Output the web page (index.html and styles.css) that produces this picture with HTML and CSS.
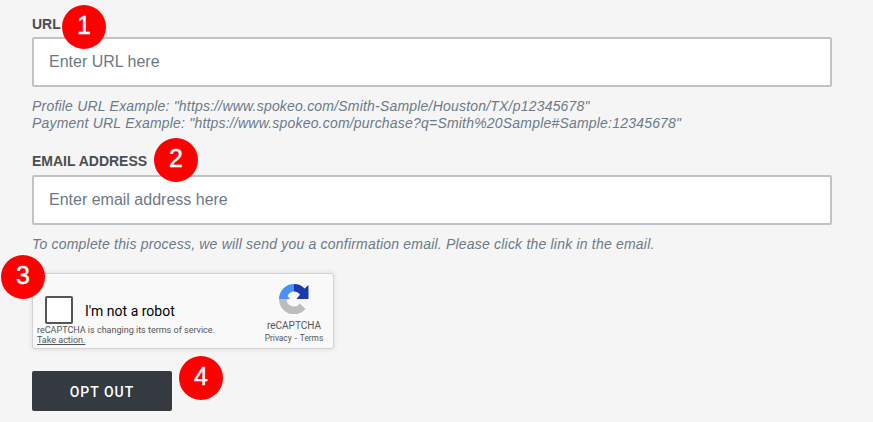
FILE: index.html
```html
<!DOCTYPE html>
<html lang="en">

<head>
    <meta charset="UTF-8">
    <meta name="viewport" content="width=device-width, initial-scale=1.0">
    <title>Opt out</title>
    <link rel="stylesheet" href="styles.css">
</head>

<body>
    <form class="form">
        <label class="label label-url" for="url">URL</label>
        <input class="input" id="url" type="text" placeholder="Enter URL here">
        <p class="hint hint-url">
            Profile URL Example: "https://www.spokeo.com/Smith-Sample/Houston/TX/p12345678"<br>
            Payment URL Example: "https://www.spokeo.com/purchase?q=Smith%20Sample#Sample:12345678"
        </p>

        <label class="label label-email" for="email">EMAIL ADDRESS</label>
        <input class="input" id="email" type="text" placeholder="Enter email address here">
        <p class="hint hint-email">To complete this process, we will send you a confirmation email. Please click the link in the email.</p>

        <!-- Captcha -->
        <div class="captcha">
            <div class="captcha-left">
                <div class="captcha-check">
                    <div class="checkbox"></div>
                    <span class="robot">I'm not a robot</span>
                </div>
                <div class="terms">
                    reCAPTCHA is changing its terms of service.<br>
                    <u>Take action.</u>
                </div>
            </div>
            <div class="captcha-brand">
                <svg class="captcha-logo" width="30" height="30" viewBox="0 0 30 30">
                    <path fill="#4a90f5" d="M15 0A15 15 0 0 0 0 15H11L8.500 12A7.500 7.500 0 0 1 15 7.500Z"/>
                    <path fill="#1c3aa9" d="M15 0A15 15 0 0 1 25.600 4.400L29.500 1V15H17.500L21 10.500A7.500 7.500 0 0 0 15 7.500Z"/>
                    <path fill="#bdbdbd" d="M0 15A15 15 0 0 0 26.500 25L21 19.500A7.500 7.500 0 0 1 7.600 16.500L9 15Z"/>
                </svg>
                <div class="brand-name">reCAPTCHA</div>
                <div class="brand-links">Privacy - Terms</div>
            </div>
        </div>

        <button class="submit" type="button">OPT OUT</button>
    </form>

    <!-- Numbered annotations -->
    <div class="badge badge-1">1</div>
    <div class="badge badge-2">2</div>
    <div class="badge badge-3">3</div>
    <div class="badge badge-4">4</div>
</body>

</html>
```

FILE: styles.css
```css
body {
    margin: 0;
    height: 422px;
    overflow: hidden;
    background-color: #f5f5f5;
    font-family: "Liberation Sans", Arial, sans-serif;
    position: relative;
}

.form {
    display: flex;
    flex-direction: column;
    align-items: flex-start;
    padding: 17px 0 0 32px;
}

.label {
    font-size: 14px;
    line-height: 15px;
    font-weight: bold;
    color: #4a4e52;
}

.label-url {
    margin-bottom: 5px;
}

.label-email {
    margin-bottom: 6px;
}

.input {
    box-sizing: border-box;
    width: 800px;
    height: 50px;
    padding: 0 15px;
    border: 2px solid #bdc3c7;
    border-radius: 2px;
    background-color: white;
    font-family: inherit;
    font-size: 16px;
}

.input::placeholder {
    color: #6c7a87;
    opacity: 1;
}

.hint {
    margin: 0;
    font-size: 14px;
    line-height: 17px;
    font-style: italic;
    letter-spacing: 0.2px;
    color: #6c7a87;
}

.hint-url {
    margin-top: 11px;
    margin-bottom: 22px;
}

.hint-email {
    margin-top: 11px;
    margin-bottom: 20px;
}

.captcha {
    box-sizing: border-box;
    width: 302px;
    height: 76px;
    display: flex;
    justify-content: space-between;
    background-color: #f9f9f9;
    border: 1px solid #d3d3d3;
    border-radius: 3px;
    box-shadow: 0 0 4px 1px rgba(0, 0, 0, 0.08);
    font-family: Roboto, "Liberation Sans", sans-serif;
}

.captcha-left {
    padding: 22px 0 0 4px;
}

.captcha-check {
    display: flex;
    align-items: center;
    height: 28px;
    padding-left: 8px;
}

.checkbox {
    box-sizing: border-box;
    width: 28px;
    height: 28px;
    border: 2px solid #555;
    border-radius: 2px;
    background-color: white;
}

.robot {
    margin: 2px 0 0 12px;
    font-size: 14px;
    color: #000;
}

.terms {
    margin-top: 1px;
    font-size: 9px;
    line-height: 10px;
    color: #555;
}

.captcha-brand {
    width: 72px;
    padding: 10px 3px 0 0;
    text-align: center;
}

.captcha-logo {
    display: block;
    margin: 0 auto;
}

.brand-name {
    margin-top: 6px;
    font-size: 10px;
    line-height: 12px;
    color: #555;
}

.brand-links {
    margin-top: 1px;
    font-size: 8.3px;
    line-height: 11px;
    word-spacing: 1px;
    color: #555;
}

.submit {
    width: 140px;
    height: 40px;
    margin-top: 22px;
    padding: 2px 0 0;
    border: none;
    border-radius: 2px;
    background-color: #343a3f;
    color: white;
    font-family: Roboto, "Liberation Sans", sans-serif;
    font-size: 14px;
    font-weight: 500;
    letter-spacing: 1px;
}

.badge {
    position: absolute;
    width: 44px;
    height: 44px;
    border-radius: 50%;
    background-color: #fe0000;
    color: white;
    font-size: 25px;
    line-height: 41px;
    text-align: center;
    -webkit-text-stroke: 0.4px white;
}

.badge-1 {
    left: 62px;
    top: 5px;
}

.badge-2 {
    left: 154px;
    top: 138px;
}

.badge-3 {
    left: 1px;
    top: 255px;
}

.badge-4 {
    left: 179px;
    top: 356px;
}
```
